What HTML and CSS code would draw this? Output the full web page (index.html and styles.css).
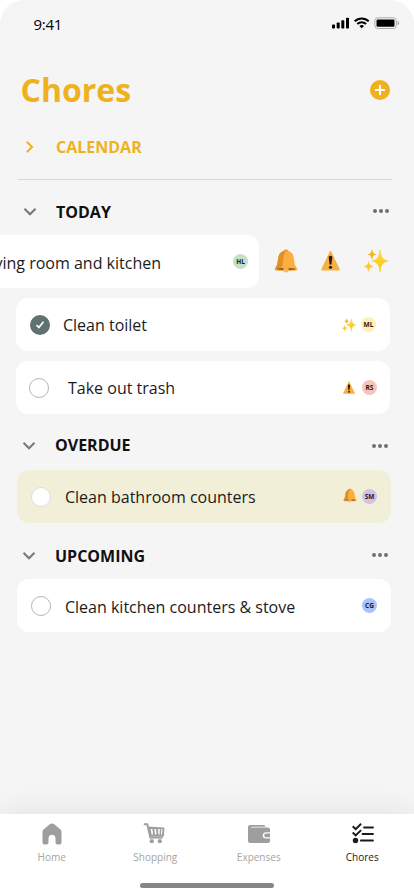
FILE: index.html
```
<!DOCTYPE html>
<html lang="en">
<head>
<meta charset="utf-8">
<title>Chores</title>
<link rel="stylesheet" href="styles.css">
</head>
<body>
<div class="screen">
  <header class="status">
    <span class="time">9:41</span>
    <svg width="68" height="14" viewBox="0 0 68 14">
      <rect x="0" y="7.500" width="3" height="4" rx=".8"/><rect x="4.700" y="5.500" width="3" height="6" rx=".8"/><rect x="9.300" y="3.200" width="3" height="8.300" rx=".8"/><rect x="14" y=".8" width="3" height="10.700" rx=".8"/>
      <g fill="none" stroke="#000" stroke-width="2"><path d="M22.700 4.300c3.900-3.800 10.100-3.800 14 0"/><path d="M25.300 7c2.500-2.400 6.300-2.400 8.800 0"/></g>
      <path d="M27.400 8.900c1.300-1.100 3.300-1.100 4.600 0l-2.300 2.400z"/>
      <rect x="42.800" y=".8" width="21.500" height="10.700" rx="3" fill="none" stroke="#aaa"/><rect x="44.500" y="2.500" width="18" height="7.300" rx="1.200"/><path d="M65.500 4v4.200c2.200-.7 2.200-3.500 0-4.200z" fill="#aaa"/>
    </svg>
  </header>
  <div class="title">
    <h1>Chores</h1>
    <svg width="20" height="20" viewBox="0 0 20 20"><circle cx="10" cy="10" r="10" fill="#f0b120"/><path d="M10 5.800v8.400M5.800 10h8.400" stroke="#fff" stroke-width="2" stroke-linecap="round"/></svg>
  </div>
  <div class="calendar">
    <svg width="10" height="14" viewBox="0 0 10 14"><path d="M1.800 1.800L7 7l-5.200 5.200" fill="none" stroke="#f0b120" stroke-width="2"/></svg>
    <h2>CALENDAR</h2>
  </div>
  <section class="today">
    <div class="heading"><svg class="chev"><use href="#down"/></svg><h2>TODAY</h2><svg class="dots"><use href="#dots"/></svg></div>
    <div class="swipe">
      <div class="card swiped"><span class="label">Clean living room and kitchen</span><i class="avatar green">HL</i></div>
      <div class="actions"><svg width="24" height="24"><use href="#bell"/></svg><svg width="19" height="21"><use href="#warn"/></svg><svg width="24" height="24"><use href="#sparkle"/></svg></div>
    </div>
    <div class="card first"><svg class="check" viewBox="0 0 20 20"><circle cx="10" cy="10" r="10" fill="#5f726e"/><path d="M6.500 10l2.400 2.500 4.600-5.800" fill="none" stroke="#fff" stroke-width="1.700"/></svg><span class="label">Clean toilet</span><svg class="tag" width="14" height="14"><use href="#sparkle"/></svg><i class="avatar yellow">ML</i></div>
    <div class="card second"><span class="ring"></span><span class="label">Take out trash</span><svg class="tag" width="12" height="13"><use href="#warn"/></svg><i class="avatar red">RS</i></div>
  </section>
  <section class="overdue">
    <div class="heading"><svg class="chev"><use href="#down"/></svg><h2>OVERDUE</h2><svg class="dots"><use href="#dots"/></svg></div>
    <div class="card late"><span class="ring"></span><span class="label">Clean bathroom counters</span><svg class="tag" width="14" height="15"><use href="#bell"/></svg><i class="avatar purple">SM</i></div>
  </section>
  <section class="upcoming">
    <div class="heading"><svg class="chev"><use href="#down"/></svg><h2>UPCOMING</h2><svg class="dots"><use href="#dots"/></svg></div>
    <div class="card"><span class="ring"></span><span class="label">Clean kitchen counters &amp; stove</span><i class="avatar blue">CG</i></div>
  </section>
  <nav>
    <div class="tabs">
      <a><svg width="24" height="24" viewBox="0 0 24 24"><path d="M2.500 9.500q0-1.200 1-2.100L9.800 2.200q2.200-1.500 4.400 0l6.300 5.200q1 .9 1 2.100v11q0 2-2 2h-2q-2 0-2-2V16c0-4.500-7-4.500-7 0v4.500q0 2-2 2h-2q-2 0-2-2z" fill="#9e9e9e"/></svg><span>Home</span></a>
      <a><svg width="24" height="24" viewBox="0 0 24 24"><g transform="translate(.8)"><path d="M0 2.300h3.500L6.500 15.500H19" fill="none" stroke="#9e9e9e" stroke-width="1.900"/><path fill-rule="evenodd" d="M3.500 4.500l16.300.9q.8 0 .8.900l-.5 8.200H6zM6.800 7.100l1 5.400h1.500l-.7-5.400zm3.800 0l.5 5.400h1.500l-.3-5.400zm3.700 0l.2 5.400h1.300l.1-5.400zm3.200 0l-.3 5.400h1l.5-5.400z" fill="#9e9e9e"/><circle cx="8" cy="19.200" r="2.100" fill="#9e9e9e"/><circle cx="16" cy="19.200" r="2.100" fill="#9e9e9e"/></g></svg><span>Shopping</span></a>
      <a><svg width="24" height="24" viewBox="0 0 24 24"><path d="M1 5q0-2 2-2h13.500q2 0 2 1.700H5q-1.300 0-1.300.8H21q2 0 2 2v2.800h-3.600c-5 0-5 6.200 0 6.200H23V19q0 2-2 2H3q-2 0-2-2z" fill="#9e9e9e"/><path d="M23 11.500h-3.600c-2.900 0-2.900 3.800 0 3.800H23z" fill="#9e9e9e"/></svg><span>Expenses</span></a>
      <a class="active"><svg width="24" height="24" viewBox="0 0 24 24" fill="none" stroke="#1b1b1b" stroke-width="2"><g transform="translate(1)"><path d="M1.700 4.200l3 2.900 5.400-5.300M1.700 10.500l3 2.900 5.400-5.300"/><path d="M13 5.500h9M11.500 12H22M9.800 18.500H22" stroke-width="1.800" stroke-linecap="round"/><circle cx="4.500" cy="18.500" r="2.700" fill="#1b1b1b" stroke="none"/></g></svg><span>Chores</span></a>
    </div>
    <div class="home-bar"></div>
  </nav>
</div>
<svg class="defs" width="0" height="0" aria-hidden="true">
  <defs>
    <linearGradient id="gold" x1="0" y1="0" x2="0" y2="1"><stop offset="0" stop-color="#fddb45"/><stop offset="1" stop-color="#fbc40c"/></linearGradient>
    <symbol id="bell" viewBox="0 0 24 24">
      <path d="M9.500 3C9.500 1 10.400.4 12 .4s2.500.6 2.500 2.600z" fill="#e58b25"/>
      <path d="M12 1.800c5.400 0 7.400 3.600 8 8.200.5 5 1 7.300 3.200 9.500.6 1.400-.4 2.200-2 2.200H2.800C1.200 21.700.2 20.900.8 19.500 3 17.300 3.500 15 4 10c.6-4.600 2.600-8.200 8-8.200z" fill="#faaf40"/>
      <path d="M12 1.800C6.600 1.800 4.600 5.400 4 10c-.5 5-1 7.300-3.200 9.500l6.700-.7C10 14 8.400 6 12 1.800z" fill="#e38f29"/>
      <path d="M2 19.800c3-.9 5.300-.9 8-.7 1.200.5 2.800.5 4 0 2.700-.2 5-.2 8 .7-1 1.100-5 1.500-10 1.500S3 20.900 2 19.800z" fill="#9a6428"/>
      <path d="M9.200 19.200h5.600l-.6 3.600c-1 .9-3.400.9-4.400 0z" fill="#ffb64f"/>
    </symbol>
    <symbol id="warn" viewBox="0 0 20 22">
      <path d="M10 1l9.200 19.200q.3.800-.6.800H1.400q-.9 0-.6-.8z" fill="#faaf40" stroke="#faaf40" stroke-linejoin="round"/>
      <path d="M10 6c1.300 0 2 .8 1.900 2L11 15.300H9L8.100 8C8 6.800 8.700 6 10 6z" fill="#231f20"/><circle cx="10" cy="18.100" r="1.700" fill="#231f20"/>
    </symbol>
    <symbol id="sparkle" viewBox="0 0 24 24">
      <path d="M16 1c.8 7 2.500 9.800 8 11-5.500 1.300-7.200 4-8 11-.8-7-2.500-9.700-8-11 5.500-1.200 7.200-4 8-11z" fill="url(#gold)" stroke="#fcce28" stroke-width=".6"/>
      <path d="M8 .8c.4 2.900 1.300 4.100 3.800 4.700C9.300 6.100 8.400 7.300 8 10.200 7.600 7.300 6.700 6.100 4.200 5.500 6.700 4.900 7.600 3.700 8 .8z" fill="#f4b01f" stroke="#f4b01f" stroke-width=".5"/>
      <path d="M4.500 12.500c.4 2.900 1.600 4.300 4.300 4.900-2.700.6-3.900 2-4.300 4.900-.4-2.900-1.500-4.300-4.200-4.900 2.700-.6 3.800-2 4.200-4.900z" fill="#fdc930" stroke="#fdc930" stroke-width=".5"/>
    </symbol>
    <symbol id="down" viewBox="0 0 14 10"><path d="M1.500 1.800L7 7.300l5.500-5.500" fill="none" stroke="#777" stroke-width="2"/></symbol>
    <symbol id="dots" viewBox="0 0 16 6"><circle cx="2" cy="3" r="2"/><circle cx="8" cy="3" r="2"/><circle cx="14" cy="3" r="2"/></symbol>
  </defs>
</svg>
</body>
</html>
```
FILE: styles.css
```
* { box-sizing: border-box; }
body { margin: 0; background: #fff; font-family: "Open Sans", sans-serif; color: #1b1b1b; }
.defs { position: absolute; top: 0; left: 0; }
h1, h2 { margin: 0; }
svg { display: block; flex: none; }
.screen { width: 414px; height: 896px; overflow: hidden; background: #f5f5f5; border-radius: 24px 24px 0 0; display: flex; flex-direction: column; }
.status { height: 48px; padding: 0 14px 0 33.500px; display: flex; align-items: center; justify-content: space-between; flex: none; }
.status svg { margin-top: -1px; }
.time { font-size: 15px; letter-spacing: -0.3px; color: #000; }
.title { height: 84px; padding: 0 24px 0 20.500px; display: flex; align-items: center; justify-content: space-between; flex: none; }
h1 { font-size: 32px; line-height: 40px; color: #f0b120; }
h2 { font-size: 16px; line-height: 24px; font-weight: 700; color: #111; }
.calendar { height: 48px; margin: 0 22px 0 18px; padding: 0 0 17px 7px; border-bottom: 1px solid #d9d9d9; display: flex; align-items: center; gap: 21px; flex: none; }
.calendar h2 { color: #f0b120; }
.heading { display: flex; align-items: center; padding: 0 25px 0 23px; }
.heading h2 { margin-left: 19px; }
.chev { width: 14px; height: 10px; }
.dots { width: 16px; height: 6px; fill: #6f6f6f; margin-left: auto; }
.today { padding-top: 20px; }
.today .heading { margin-bottom: 11px; }
.today .dots { margin-top: -2px; }
.card { width: 374px; height: 53px; margin-left: 16px; padding: 0 14px; border-radius: 12px; background: #fff; display: flex; align-items: center; flex: none; }
.label { font-size: 16px; line-height: 24px; white-space: nowrap; }
.swipe { display: flex; align-items: center; margin-bottom: 10px; }
.swiped { margin-left: -115px; padding-right: 11px; justify-content: flex-end; }
.swiped .label { margin-right: 72px; padding-top: 3px; }
.swiped .avatar { margin-left: 0; }
.actions { display: flex; align-items: center; margin: -2px 0 0 14.500px; gap: 23.500px; }
.first { margin-bottom: 10px; }
.check { width: 20px; height: 20px; }
.first .label { margin-left: 13px; }
.second { padding-left: 13px; padding-right: 13px; }
.second .label { margin-left: 19px; }
.second .tag { margin-right: 7.500px; }
.ring { width: 20px; height: 20px; border: 1px solid #b5b5b5; border-radius: 50%; background: #fff; flex: none; }
.tag { margin-left: auto; margin-right: 5.500px; }
.late .tag { margin-top: -2px; }
.avatar { width: 15px; height: 15px; border-radius: 50%; font-size: 6.500px; line-height: 15px; font-weight: 700; font-style: normal; text-align: center; flex: none; }
.green { background: #c5dfca; }
.yellow { background: #fff0b5; }
.red { background: #f4c5bc; }
.purple { background: #d7bfed; }
.blue { background: #abc2f8; margin-left: auto; }
.overdue { padding-top: 19px; }
.overdue .heading, .upcoming .heading { padding-left: 22px; padding-right: 26px; }
.overdue .heading { margin-bottom: 13px; }
.overdue .chev, .overdue .dots { margin-top: 2px; }
.upcoming .dots { margin-top: -2px; }
.overdue .card, .upcoming .card { margin-left: 17px; }
.overdue .label, .upcoming .label { margin-left: 14px; }
.late { background: #f2efd9; }
.late .ring { border-color: #ddd; }
.upcoming { padding-top: 21px; }
.upcoming .heading { margin-bottom: 11px; }
.upcoming .label { padding-top: 3px; }
nav { margin-top: auto; height: 82px; background: #fff; box-shadow: 0 -2px 32px rgba(0, 0, 0, .08); flex: none; }
.tabs { display: flex; padding-top: 8px; }
.tabs a { width: 103.600px; display: flex; flex-direction: column; align-items: center; font-size: 10px; line-height: 14px; color: #a4a4a4; gap: 4px; }
.tabs .active { color: #1b1b1b; }
.home-bar { width: 134px; height: 5px; border-radius: 3px; background: #868686; margin: 19px auto 0; }
```
